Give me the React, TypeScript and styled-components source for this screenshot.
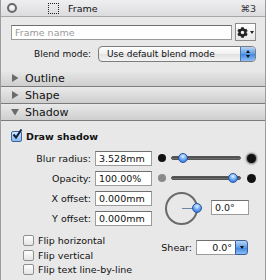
import React from "react";
import styled, { createGlobalStyle } from "styled-components";
import { FaCog } from "react-icons/fa";

const GlobalStyle = createGlobalStyle`
  body {
    margin: 0;
    background: #e8e8e8;
    font-family: "DejaVu Sans", "Liberation Sans", sans-serif;
    font-size: 9px;
    color: #111;
  }
`;

const Panel = styled.div`
  width: 266px;
  height: 280px;
  box-sizing: border-box;
  border-left: 1px solid #9c9c9c;
  border-right: 1px solid #9c9c9c;
  background: #e8e8e8;
  overflow: hidden;
  display: flex;
  flex-direction: column;
`;

const TitleBar = styled.header`
  height: 16px;
  flex: none;
  display: flex;
  align-items: center;
  padding-left: 6px;
  background: linear-gradient(#efeef0, #dcdbde);
  border-bottom: 1px solid #a7a7a7;
  font-size: 9.5px;
`;

const Radio = styled.span`
  width: 10px;
  height: 10px;
  box-sizing: border-box;
  border-radius: 50%;
  border: 2px solid #6a6a6a;
  background: radial-gradient(circle at 50% 35%, #ffffff, #d4d4d4);
  margin-right: 31px;
`;

const DashedBox = styled.span`
  width: 9px;
  height: 9px;
  border: 1px dotted #222;
  margin-right: 9px;
`;

const Title = styled.span`
  flex: 1;
`;

const Shortcut = styled.span`
  margin-right: 9px;
  color: #333;
`;

const NameRow = styled.div`
  display: flex;
  align-items: center;
  gap: 3px;
  margin: 6px 9px 0 10px;
  height: 18px;
`;

const NameInput = styled.input`
  flex: 1;
  min-width: 0;
  height: 13px;
  box-sizing: content-box;
  border: 1px solid #9b9b9b;
  border-top-color: #6e6e6e;
  padding: 0 3px;
  font: inherit;
  font-size: 9.5px;
  background: #fff;
  &::placeholder {
    color: #9a9a9a;
  }
`;

const GearButton = styled.div`
  width: 19px;
  height: 16px;
  border: 1px solid #8c8c8c;
  background: linear-gradient(#ffffff, #e6e6e6);
  display: flex;
  align-items: center;
  justify-content: center;
  gap: 2px;
  color: #222;
`;

const TinyDown = styled.span`
  width: 0;
  height: 0;
  border-left: 2.5px solid transparent;
  border-right: 2.5px solid transparent;
  border-top: 3px solid #222;
`;

const BlendRow = styled.div`
  display: flex;
  align-items: center;
  margin: 5px 9px 0 0;
  height: 16px;
`;

const RowLabel = styled.span<{ $width: number }>`
  width: ${(p) => p.$width}px;
  text-align: right;
  flex: none;
`;

const Popup = styled.div`
  flex: 1;
  height: 14px;
  margin-left: 7px;
  border: 1px solid #7d7d7d;
  border-radius: 4px;
  background: linear-gradient(#ffffff, #f0f0f0 50%, #e2e2e2 51%, #f4f4f4);
  display: flex;
  align-items: center;
  overflow: hidden;
  padding-left: 8px;
`;

const PopupText = styled.span`
  flex: 1;
`;

const Stepper = styled.div`
  width: 14px;
  height: 100%;
  background: linear-gradient(#b6d4f5, #5f9de6 50%, #3f86e0 51%, #8fc0f4);
  border-left: 1px solid #4a75b4;
  display: flex;
  flex-direction: column;
  align-items: center;
  justify-content: center;
  gap: 2px;
`;

const Arrow = styled.span<{ $dir: "up" | "down" }>`
  width: 0;
  height: 0;
  border-left: 2px solid transparent;
  border-right: 2px solid transparent;
  ${(p) =>
    p.$dir === "up"
      ? "border-bottom: 3px solid #111;"
      : "border-top: 3px solid #111;"}
`;

const Sections = styled.div`
  margin-top: 8px;
`;

const SectionHeader = styled.div`
  height: 16px;
  display: flex;
  align-items: center;
  padding-left: 10px;
  gap: 6px;
  background: linear-gradient(#e9e9e9, #d9d9d9 60%, #cecece);
  border-bottom: 1px solid #7c7c7c;
  font-size: 11px;
  color: #111;
`;

const Body = styled.div`
  flex: 1;
  display: flex;
  flex-direction: column;
  padding-top: 8px;
`;

const CheckRow = styled.label<{ $indent: number; $bold?: boolean }>`
  display: flex;
  align-items: center;
  gap: 4px;
  margin-left: ${(p) => p.$indent}px;
  height: 14.5px;
  font-weight: ${(p) => (p.$bold ? "bold" : "normal")};
  font-size: 9.5px;
`;

const Box = styled.span<{ $checked?: boolean }>`
  width: 9px;
  height: 9px;
  border: 1px solid ${(p) => (p.$checked ? "#3b66a6" : "#8f8f8f")};
  border-radius: 2px;
  background: ${(p) =>
    p.$checked
      ? "linear-gradient(#d6e7fb, #8ab8ee)"
      : "linear-gradient(#ffffff, #e4e4e4)"};
  position: relative;
  flex: none;
`;

const Fields = styled.div`
  display: grid;
  grid-template-columns: 90px 57px 1fr;
  grid-auto-rows: 15px;
  column-gap: 4px;
  row-gap: 5px;
  margin-top: 7px;
`;

const FieldLabel = styled.span`
  text-align: right;
  align-self: center;
  font-size: 9.5px;
`;

const TextField = styled.div<{ $align?: "left" | "right" }>`
  background: #fff;
  border: 1px solid #9b9b9b;
  border-top-color: #6f6f6f;
  display: flex;
  align-items: center;
  justify-content: ${(p) => (p.$align === "right" ? "flex-end" : "flex-start")};
  padding: 0 3px;
  font-size: 9.5px;
  box-sizing: border-box;
  height: 15px;
  overflow: hidden;
  white-space: nowrap;
`;

const SliderRow = styled.div`
  display: flex;
  align-items: center;
  padding-left: 2px;
`;

const Dot = styled.span<{ $size: number; $color: string; $blur?: boolean }>`
  width: ${(p) => p.$size}px;
  height: ${(p) => p.$size}px;
  border-radius: 50%;
  background: ${(p) => p.$color};
  flex: none;
  ${(p) => (p.$blur ? "box-shadow: 0 0 2px 1px rgba(0,0,0,0.55);" : "")}
`;

const Track = styled.div`
  position: relative;
  width: 70px;
  height: 4px;
  margin: 0 6px 0 5px;
  border-radius: 2px;
  background: linear-gradient(#3e3e3e, #7a7a7a);
  border: 1px solid #555;
  box-sizing: border-box;
`;

const Knob = styled.span<{ $at: number }>`
  position: absolute;
  top: 50%;
  left: ${(p) => p.$at * 100}%;
  width: 10px;
  height: 10px;
  margin: -5px 0 0 -5px;
  border-radius: 50%;
  border: 1px solid #2a55a0;
  box-sizing: border-box;
  background: radial-gradient(circle at 50% 30%, #e4f1ff, #5c9df0 55%, #2767d6);
`;

const DialArea = styled.div`
  grid-row: span 2;
  display: flex;
  align-items: center;
  padding-left: 9px;
`;

const Dial = styled.div`
  position: relative;
  width: 33px;
  height: 33px;
  box-sizing: border-box;
  border: 2px solid #6a6a6a;
  border-radius: 50%;
  flex: none;
`;

const DialHand = styled.span`
  position: absolute;
  left: 50%;
  top: 50%;
  width: 15px;
  height: 1px;
  margin-top: -0.5px;
  background: #6b86a6;
`;

const DialKnob = styled(Knob)`
  left: auto;
  right: -6px;
  margin: -5px 0 0 0;
`;

const AngleField = styled(TextField)`
  width: 38px;
  margin-left: 13px;
  margin-bottom: 2px;
`;

const Bottom = styled.div`
  display: flex;
  margin-top: 8px;
`;

const Flips = styled.div`
  display: flex;
  flex-direction: column;
  flex: 1;
`;

const ShearRow = styled.div`
  display: flex;
  align-items: center;
  gap: 4px;
  height: 15px;
  margin: 6px 17px 0 0;
  font-size: 9.5px;
`;

const Combo = styled.div`
  display: flex;
  width: 52px;
  height: 15px;
`;

const ComboField = styled(TextField)`
  flex: 1;
  border-right: none;
`;

const ComboButton = styled.div`
  width: 11px;
  border: 1px solid #3b5f9b;
  border-radius: 0 3px 3px 0;
  background: linear-gradient(#b9d6f6, #5c9ce6 50%, #3b83df 51%, #8dbff4);
  display: flex;
  align-items: center;
  justify-content: center;
`;

function Triangle({ open }: { open?: boolean }) {
  return (
    <svg width="8" height="8" viewBox="0 0 8 8">
      {open ? (
        <polygon points="0,1 8,1 4,7.5" fill="#6b6b6b" />
      ) : (
        <polygon points="1,0 7.5,4 1,8" fill="#6b6b6b" />
      )}
    </svg>
  );
}

function Check() {
  return (
    <svg
      width="11"
      height="11"
      viewBox="0 0 11 11"
      style={{ position: "absolute", left: 0, top: -3 }}
    >
      <path
        d="M1.5 5.5 L4 8.5 L9.5 0.5"
        stroke="#10213f"
        strokeWidth="2"
        fill="none"
      />
    </svg>
  );
}

function CheckItem(props: {
  label: string;
  checked?: boolean;
  bold?: boolean;
  indent: number;
}) {
  return (
    <CheckRow $indent={props.indent} $bold={props.bold}>
      <Box $checked={props.checked}>{props.checked && <Check />}</Box>
      {props.label}
    </CheckRow>
  );
}

export default function App() {
  return (
    <>
      <GlobalStyle />
      <Panel>
        <TitleBar>
          <Radio />
          <DashedBox />
          <Title>Frame</Title>
          <Shortcut>⌘3</Shortcut>
        </TitleBar>

        <NameRow>
          <NameInput placeholder="Frame name" />
          <GearButton>
            <FaCog size={11} />
            <TinyDown />
          </GearButton>
        </NameRow>

        <BlendRow>
          <RowLabel $width={90}>Blend mode:</RowLabel>
          <Popup>
            <PopupText>Use default blend mode</PopupText>
            <Stepper>
              <Arrow $dir="up" />
              <Arrow $dir="down" />
            </Stepper>
          </Popup>
        </BlendRow>

        <Sections>
          <SectionHeader>
            <Triangle />
            Outline
          </SectionHeader>
          <SectionHeader>
            <Triangle />
            Shape
          </SectionHeader>
          <SectionHeader>
            <Triangle open />
            Shadow
          </SectionHeader>
        </Sections>

        <Body>
          <CheckItem label="Draw shadow" checked bold indent={10} />

          <Fields>
            <FieldLabel>Blur radius:</FieldLabel>
            <TextField>3.528mm</TextField>
            <SliderRow>
              <Dot $size={8} $color="#111" />
              <Track>
                <Knob $at={0.16} />
              </Track>
              <Dot $size={9} $color="#111" $blur />
            </SliderRow>

            <FieldLabel>Opacity:</FieldLabel>
            <TextField>100.00%</TextField>
            <SliderRow>
              <Dot $size={8} $color="#8a8a8a" />
              <Track>
                <Knob $at={0.89} />
              </Track>
              <Dot $size={9} $color="#111" />
            </SliderRow>

            <FieldLabel>X offset:</FieldLabel>
            <TextField>0.000mm</TextField>
            <DialArea>
              <Dial>
                <DialHand />
                <DialKnob $at={1} />
              </Dial>
              <AngleField>0.0°</AngleField>
            </DialArea>

            <FieldLabel>Y offset:</FieldLabel>
            <TextField>0.000mm</TextField>
          </Fields>

          <Bottom>
            <Flips>
              <CheckItem label="Flip horizontal" indent={22} />
              <CheckItem label="Flip vertical" indent={22} />
              <CheckItem label="Flip text line-by-line" indent={22} />
            </Flips>
            <ShearRow>
              Shear:
              <Combo>
                <ComboField $align="right">0.0°</ComboField>
                <ComboButton>
                  <Arrow $dir="down" />
                </ComboButton>
              </Combo>
            </ShearRow>
          </Bottom>
        </Body>
      </Panel>
    </>
  );
}
